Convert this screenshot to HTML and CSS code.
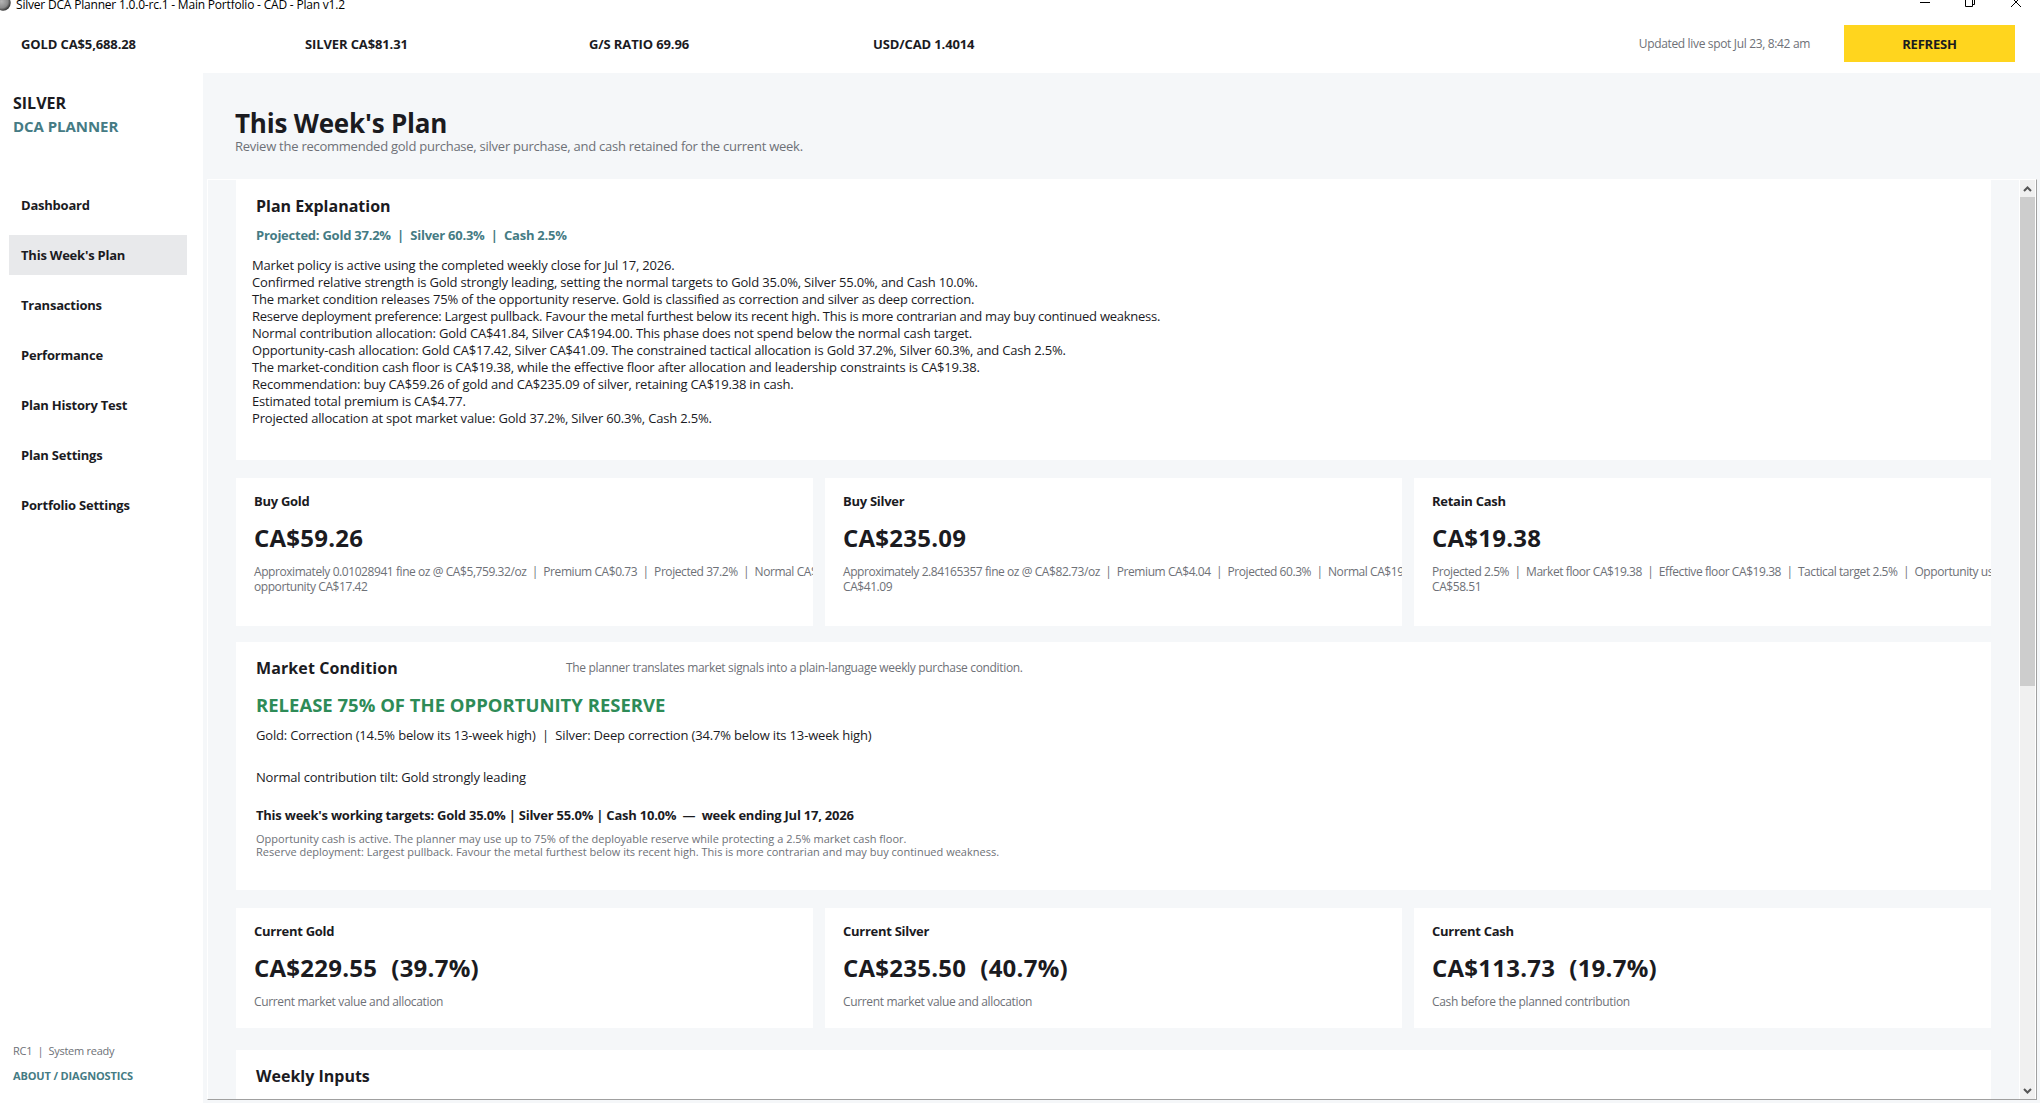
FILE: index.html
```
<!DOCTYPE html>
<html lang="en">
<head>
    <meta charset="UTF-8">
    <meta name="viewport" content="width=device-width, initial-scale=1.0">
    <title>Silver DCA Planner</title>
    <link rel="stylesheet" href="styles.css">
</head>
<body>
    <header class="top">
        <div class="title-bar">
            <svg class="app-icon" width="20" height="20" viewBox="0 0 20 20">
                <defs>
                    <radialGradient id="coin" cx="40%" cy="40%" r="60%">
                        <stop offset="0" stop-color="#b5b5b5"/>
                        <stop offset="0.7" stop-color="#8a8a8a"/>
                        <stop offset="1" stop-color="#3c3c3c"/>
                    </radialGradient>
                </defs>
                <circle cx="10" cy="10" r="7.700" fill="url(#coin)"/>
            </svg>
            <span class="window-title">Silver DCA Planner 1.0.0-rc.1 - Main Portfolio - CAD - Plan v1.2</span>
            <div class="window-controls">
                <svg width="12" height="12" viewBox="0 0 12 12"><path d="M2 5.500h10"/></svg>
                <svg width="12" height="12" viewBox="0 0 12 12"><path d="M1.500 2.500h7v7h-7zM3.500 2.500v-2h7v7h-2"/></svg>
                <svg width="12" height="12" viewBox="0 0 12 12"><path d="M1 0l10 10M11 0L1 10"/></svg>
            </div>
        </div>
        <div class="ticker">
            <span class="quote">GOLD CA$5,688.28</span>
            <span class="quote">SILVER CA$81.31</span>
            <span class="quote">G/S RATIO 69.96</span>
            <span class="quote">USD/CAD 1.4014</span>
            <span class="updated">Updated live spot Jul 23, 8:42 am</span>
            <button class="refresh">REFRESH</button>
        </div>
    </header>

    <div class="layout">
        <aside class="sidebar">
            <div class="brand">SILVER</div>
            <div class="brand brand-sub">DCA PLANNER</div>
            <nav class="nav">
                <a class="nav-item">Dashboard</a>
                <a class="nav-item active">This Week's Plan</a>
                <a class="nav-item">Transactions</a>
                <a class="nav-item">Performance</a>
                <a class="nav-item">Plan History Test</a>
                <a class="nav-item">Plan Settings</a>
                <a class="nav-item">Portfolio Settings</a>
            </nav>
            <div class="side-footer">
                <div class="status">RC1&nbsp; |&nbsp; System ready</div>
                <div class="about">ABOUT / DIAGNOSTICS</div>
            </div>
        </aside>

        <main class="main">
            <div class="page-header">
                <h1>This Week's Plan</h1>
                <p>Review the recommended gold purchase, silver purchase, and cash retained for the current week.</p>
            </div>

            <div class="scroll-area">
                <div class="content">
                    <section class="card explanation">
                        <h2>Plan Explanation</h2>
                        <div class="projected">Projected: Gold 37.2%&nbsp; |&nbsp; Silver 60.3%&nbsp; |&nbsp; Cash 2.5%</div>
                        <div class="lines">
                            <p>Market policy is active using the completed weekly close for Jul 17, 2026.</p>
                            <p>Confirmed relative strength is Gold strongly leading, setting the normal targets to Gold 35.0%, Silver 55.0%, and Cash 10.0%.</p>
                            <p>The market condition releases 75% of the opportunity reserve. Gold is classified as correction and silver as deep correction.</p>
                            <p class="tight">Reserve deployment preference: Largest pullback. Favour the metal furthest below its recent high. This is more contrarian and may buy continued weakness.</p>
                            <p>Normal contribution allocation: Gold CA$41.84, Silver CA$194.00. This phase does not spend below the normal cash target.</p>
                            <p>Opportunity-cash allocation: Gold CA$17.42, Silver CA$41.09. The constrained tactical allocation is Gold 37.2%, Silver 60.3%, and Cash 2.5%.</p>
                            <p>The market-condition cash floor is CA$19.38, while the effective floor after allocation and leadership constraints is CA$19.38.</p>
                            <p>Recommendation: buy CA$59.26 of gold and CA$235.09 of silver, retaining CA$19.38 in cash.</p>
                            <p>Estimated total premium is CA$4.77.</p>
                            <p>Projected allocation at spot market value: Gold 37.2%, Silver 60.3%, Cash 2.5%.</p>
                        </div>
                    </section>

                    <div class="card-row buy">
                        <div class="card stat">
                            <h3>Buy Gold</h3>
                            <div class="value">CA$59.26</div>
                            <div class="detail">Approximately 0.01028941 fine oz @ CA$5,759.32/oz&nbsp; |&nbsp; Premium CA$0.73&nbsp; |&nbsp; Projected 37.2%&nbsp; |&nbsp; Normal CA$41.84,<br>opportunity CA$17.42</div>
                        </div>
                        <div class="card stat">
                            <h3>Buy Silver</h3>
                            <div class="value">CA$235.09</div>
                            <div class="detail">Approximately 2.84165357 fine oz @ CA$82.73/oz&nbsp; |&nbsp; Premium CA$4.04&nbsp; |&nbsp; Projected 60.3%&nbsp; |&nbsp; Normal CA$194.00,<br>CA$41.09</div>
                        </div>
                        <div class="card stat">
                            <h3>Retain Cash</h3>
                            <div class="value">CA$19.38</div>
                            <div class="detail">Projected 2.5%&nbsp; |&nbsp; Market floor CA$19.38&nbsp; |&nbsp; Effective floor CA$19.38&nbsp; |&nbsp; Tactical target 2.5%&nbsp; |&nbsp; Opportunity used<br>CA$58.51</div>
                        </div>
                    </div>

                    <section class="card market">
                        <div class="market-head">
                            <h2>Market Condition</h2>
                            <span class="note">The planner translates market signals into a plain-language weekly purchase condition.</span>
                        </div>
                        <div class="signal">RELEASE 75% OF THE OPPORTUNITY RESERVE</div>
                        <div class="condition">Gold: Correction (14.5% below its 13-week high)&nbsp; |&nbsp; Silver: Deep correction (34.7% below its 13-week high)</div>
                        <div class="condition tilt">Normal contribution tilt: Gold strongly leading</div>
                        <div class="targets">This week's working targets: Gold 35.0% | Silver 55.0% | Cash 10.0%&nbsp; —&nbsp; week ending Jul 17, 2026</div>
                        <div class="fine">
                            <p>Opportunity cash is active. The planner may use up to 75% of the deployable reserve while protecting a 2.5% market cash floor.</p>
                            <p>Reserve deployment: Largest pullback. Favour the metal furthest below its recent high. This is more contrarian and may buy continued weakness.</p>
                        </div>
                    </section>

                    <div class="card-row current">
                        <div class="card stat">
                            <h3>Current Gold</h3>
                            <div class="value">CA$229.55&nbsp; (39.7%)</div>
                            <div class="detail">Current market value and allocation</div>
                        </div>
                        <div class="card stat">
                            <h3>Current Silver</h3>
                            <div class="value">CA$235.50&nbsp; (40.7%)</div>
                            <div class="detail">Current market value and allocation</div>
                        </div>
                        <div class="card stat">
                            <h3>Current Cash</h3>
                            <div class="value">CA$113.73&nbsp; (19.7%)</div>
                            <div class="detail">Cash before the planned contribution</div>
                        </div>
                    </div>

                    <section class="card inputs">
                        <h2>Weekly Inputs</h2>
                    </section>
                </div>

                <div class="scrollbar">
                    <svg class="arrow" width="15" height="17" viewBox="0 0 15 17"><path d="M4 11l3.500-3.500 3.500 3.500"/></svg>
                    <div class="thumb"></div>
                    <svg class="arrow" width="15" height="17" viewBox="0 0 15 17"><path d="M4 7l3.500 3.500 3.500-3.500"/></svg>
                </div>
            </div>
        </main>
    </div>
</body>
</html>
```
FILE: styles.css
```
* {
    box-sizing: border-box;
    margin: 0;
    padding: 0;
}

body {
    height: 1103px;
    overflow: hidden;
    display: flex;
    flex-direction: column;
    background-color: #fff;
    color: #1b1b1f;
    font-family: "Open Sans", "Noto Sans", sans-serif;
    font-size: 13px;
    white-space: nowrap;
}

/* Window frame and ticker */
.top {
    height: 73px;
    flex-shrink: 0;
}

.title-bar {
    height: 15px;
    display: flex;
    align-items: flex-start;
}

.app-icon {
    margin: -7px 0 0 -7px;
}

.window-title {
    margin: -4px 0 0 3px;
    font-size: 12px;
    line-height: 18px;
    letter-spacing: -0.2px;
    color: #000;
}

.window-controls {
    display: flex;
    gap: 34px;
    margin: -3px 18px 0 auto;
}

.window-controls path {
    fill: none;
    stroke: #000;
}

.ticker {
    height: 58px;
    padding: 10px 25px 0 21px;
    display: flex;
    align-items: flex-start;
    line-height: 38px;
}

.quote {
    width: 284px;
    font-weight: 700;
    letter-spacing: -0.12px;
}

.updated {
    margin-left: auto;
    margin-right: 34px;
    font-size: 12px;
    letter-spacing: -0.34px;
    color: #6e7177;
}

.refresh {
    width: 171px;
    height: 37px;
    border: none;
    background-color: #ffd51e;
    color: #1b1b1f;
    font-family: inherit;
    font-size: 13px;
    font-weight: 700;
    letter-spacing: -0.2px;
}

.layout {
    flex: 1;
    display: flex;
    min-height: 0;
}

/* Sidebar */
.sidebar {
    width: 203px;
    padding-top: 18px;
    display: flex;
    flex-direction: column;
}

.brand {
    padding-left: 13px;
    line-height: 24px;
    font-size: 16px;
    font-weight: 700;
}

.brand-sub {
    font-size: 15px;
    line-height: 22px;
    letter-spacing: -0.05px;
    color: #457b84;
}

.nav {
    margin: 48px 16px 0 9px;
    display: flex;
    flex-direction: column;
    gap: 10px;
}

.nav-item {
    height: 40px;
    padding-left: 12px;
    line-height: 40px;
    font-weight: 700;
    letter-spacing: -0.22px;
}

.nav-item.active {
    background-color: #e8e9eb;
}

.side-footer {
    margin-top: auto;
    padding: 0 0 15px 13px;
    font-size: 11px;
    line-height: 25px;
}

.status {
    letter-spacing: -0.26px;
    color: #6e7177;
}

.about {
    color: #457b84;
    font-weight: 700;
    letter-spacing: -0.15px;
}

/* Page */
.main {
    flex: 1;
    display: flex;
    flex-direction: column;
    background-color: #f5f7f9;
}

.page-header {
    height: 106px;
    padding: 36px 0 0 32px;
}

.page-header h1 {
    font-size: 26px;
    line-height: 28px;
    font-weight: 700;
    letter-spacing: -0.2px;
}

.page-header p {
    line-height: 19px;
    letter-spacing: -0.25px;
    color: #6e7177;
}

.scroll-area {
    height: 921px;
    margin: 0 3px 0 4px;
    border: 1px solid #fff;
    border-right-color: #a0a0a0;
    border-bottom-color: #a0a0a0;
    display: flex;
    overflow: hidden;
}

.content {
    flex: 1;
    padding: 0 28px;
    display: flex;
    flex-direction: column;
}

.card {
    background-color: #fff;
    flex-shrink: 0;
}

.card h2 {
    font-size: 16px;
    line-height: 24px;
    font-weight: 700;
}

.explanation {
    height: 280px;
    padding: 14px 20px;
}

.projected {
    margin-top: 7px;
    line-height: 20px;
    font-weight: 700;
    letter-spacing: -0.24px;
    color: #457b84;
}

.lines {
    margin: 12px 0 0 -4px;
    line-height: 17px;
    letter-spacing: -0.18px;
}

.lines .tight {
    letter-spacing: -0.26px;
}

.card-row {
    margin-top: 18px;
    display: grid;
    grid-template-columns: repeat(3, 577px);
    gap: 12px;
}

.stat {
    height: 148px;
    padding: 13px 0 0 18px;
    overflow: hidden;
}

.stat h3 {
    font-size: 13px;
    line-height: 20px;
    font-weight: 700;
    letter-spacing: -0.28px;
}

.value {
    margin-top: 10px;
    font-size: 24px;
    line-height: 34px;
    font-weight: 700;
    letter-spacing: 0.25px;
    word-spacing: 0.5px;
}

.detail {
    margin-top: 9px;
    font-size: 12px;
    line-height: 15px;
    letter-spacing: -0.34px;
    color: #6e7177;
}

.buy .detail {
    letter-spacing: -0.43px;
}

.current .stat {
    height: 120px;
}

.market {
    height: 248px;
    margin-top: 16px;
    padding: 14px 20px;
}

.market-head {
    display: flex;
    align-items: flex-start;
}

.market-head h2 {
    width: 310px;
    letter-spacing: 0.1px;
}

.note {
    font-size: 12px;
    line-height: 24px;
    letter-spacing: -0.33px;
    color: #6e7177;
}

.signal {
    margin-top: 11px;
    font-size: 18.5px;
    line-height: 28px;
    font-weight: 700;
    color: #2e8b57;
}

.condition {
    margin-top: 5px;
    line-height: 22px;
    letter-spacing: -0.17px;
}

.tilt {
    margin-top: 20px;
}

.targets {
    margin-top: 16px;
    line-height: 22px;
    font-weight: 700;
    letter-spacing: -0.23px;
}

.fine {
    margin-top: 6px;
    font-size: 11px;
    line-height: 13px;
    color: #6e7177;
}

.inputs {
    height: 200px;
    margin-top: 22px;
    padding: 14px 20px;
}

/* Scrollbar */
.scrollbar {
    width: 17px;
    border-left: 1px solid #fff;
    border-right: 1px solid #fff;
    background-color: #f0f0f0;
    display: flex;
    flex-direction: column;
}

.scrollbar .thumb {
    height: 489px;
    margin-bottom: auto;
    background-color: #cdcdcd;
}

.arrow path {
    fill: none;
    stroke: #555;
    stroke-width: 2;
}
```
